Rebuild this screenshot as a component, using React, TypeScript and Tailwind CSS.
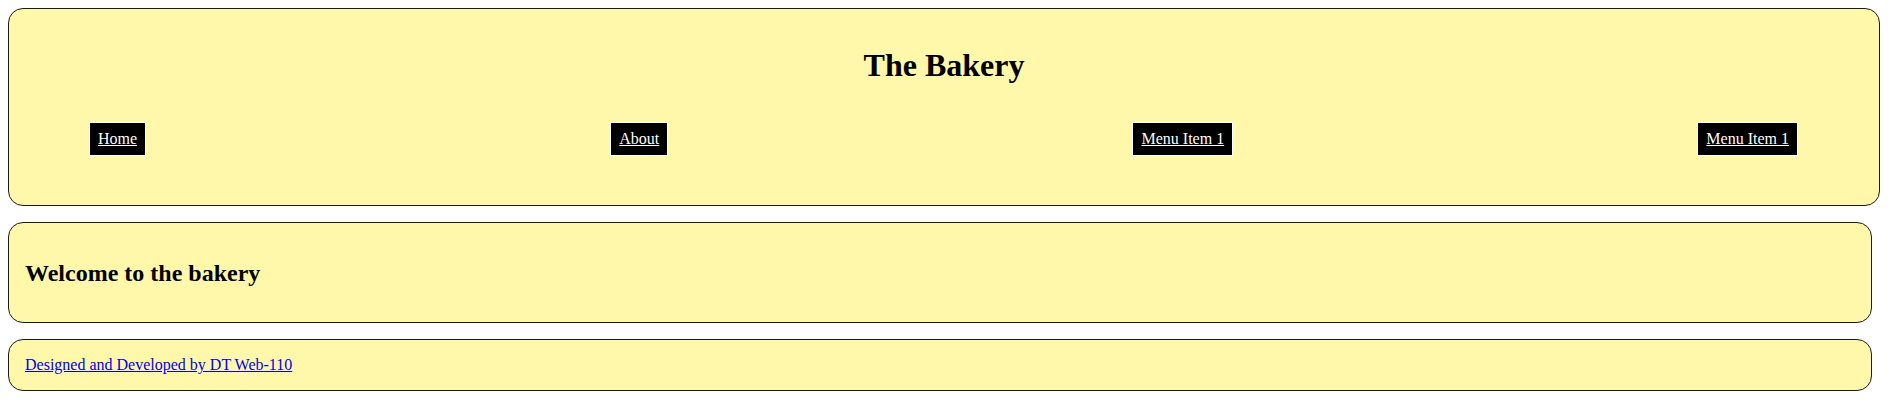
const navItems = ["Home", "About", "Menu Item 1", "Menu Item 1"];

export default function App() {
  return (
    <div className="flex w-[1872px] flex-col gap-4 pl-2 pt-2 font-['Liberation_Serif',serif] text-black">
      <header className="h-[198px] w-[1872px] rounded-[15px] border border-[#1a1a1a] bg-[#fff8aa] pt-[38px]">
        <h1 className="text-center text-[32px] font-bold leading-[37px]">The Bakery</h1>
        <nav className="mt-[38px] flex justify-between pl-[80px] pr-[81px]">
          {navItems.map((item, i) => (
            <a
              key={i}
              href="#"
              className="border border-white bg-black px-2 py-[7px] text-[16px] leading-[18px] text-white underline"
            >
              {item}
            </a>
          ))}
        </nav>
      </header>

      <section className="flex h-[101px] items-center rounded-[15px] border border-[#1a1a1a] bg-[#fff8aa] px-4">
        <h2 className="text-[24px] font-bold leading-[28px]">Welcome to the bakery</h2>
      </section>

      <footer className="flex h-[52px] items-center rounded-[15px] border border-[#1a1a1a] bg-[#fff8aa] px-4">
        <a href="#" className="text-[16px] leading-[18px] text-[#0000ee] underline">
          Designed and Developed by DT Web-110
        </a>
      </footer>
    </div>
  );
}
